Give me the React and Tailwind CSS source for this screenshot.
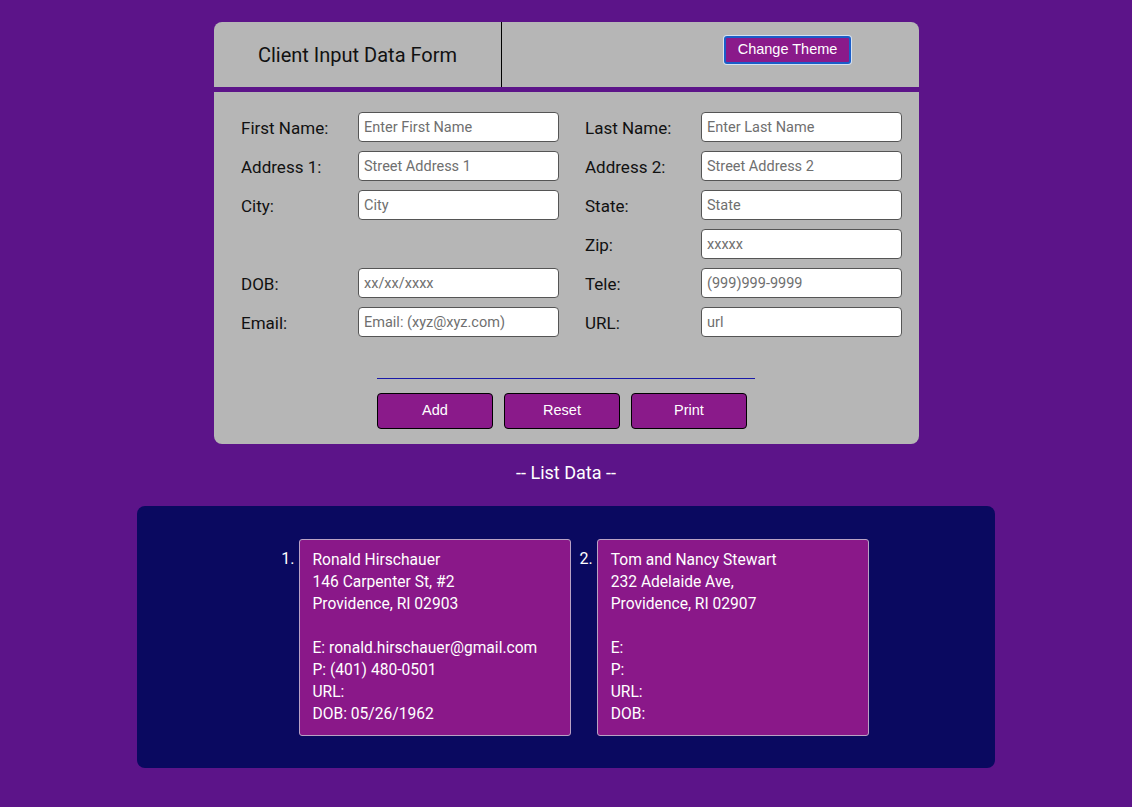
import React from "react";

const fields = [
  [
    { label: "First Name:", ph: "Enter First Name" },
    { label: "Last Name:", ph: "Enter Last Name" },
  ],
  [
    { label: "Address 1:", ph: "Street Address 1" },
    { label: "Address 2:", ph: "Street Address 2" },
  ],
  [
    { label: "City:", ph: "City" },
    { label: "State:", ph: "State" },
  ],
  [null, { label: "Zip:", ph: "xxxxx" }],
  [
    { label: "DOB:", ph: "xx/xx/xxxx" },
    { label: "Tele:", ph: "(999)999-9999" },
  ],
  [
    { label: "Email:", ph: "Email: (xyz@xyz.com)" },
    { label: "URL:", ph: "url" },
  ],
];

const clients = [
  {
    name: "Ronald Hirschauer",
    addr1: "146 Carpenter St, #2",
    addr2: "Providence, RI 02903",
    email: "ronald.hirschauer@gmail.com",
    phone: "(401) 480-0501",
    url: "",
    dob: "05/26/1962",
  },
  {
    name: "Tom and Nancy Stewart",
    addr1: "232 Adelaide Ave,",
    addr2: "Providence, RI 02907",
    email: "",
    phone: "",
    url: "",
    dob: "",
  },
];

function Field({ field, labelWidth }) {
  if (!field) return <div className="w-[318px]" />;
  return (
    <div className="flex items-center">
      <label className={`${labelWidth} pt-[3px] text-[17px] text-[#111]`}>{field.label}</label>
      <input
        placeholder={field.ph}
        className="h-[30px] w-[201px] rounded-[4px] border border-[#555] bg-white px-[5px] text-[14.5px] text-black placeholder:text-[#6f6f6f] outline-none"
      />
    </div>
  );
}

export default function App() {
  return (
    <div
      className="min-h-[807px] w-full bg-[#5c1489] pt-[22px]"
      style={{ fontFamily: "Roboto, 'Liberation Sans', sans-serif" }}
    >
      {/* form card */}
      <div className="ml-[214px] w-[705px] overflow-hidden rounded-[8px] bg-[#b6b6b6]">
        <div className="box-content flex h-[65px] border-b-[5px] border-[#5c1489]">
          <div className="flex w-[288px] items-center justify-center border-r border-black">
            <h1 className="text-[20px] text-[#111]">Client Input Data Form</h1>
          </div>
          <div className="flex-1 pl-[222px] pt-[14px]">
            <button
              className="h-[28px] w-[127px] rounded-[3px] border-2 border-[#1a5dc8] bg-[#8a1a8a] text-[14.5px] text-white shadow-[0_0_0_1px_#d6e2f2]"
              style={{ fontFamily: "'Liberation Sans', Arial, sans-serif" }}
            >
              Change Theme
            </button>
          </div>
        </div>

        <div className="pl-[27px] pr-[16px] pt-[20px] pb-[15px]">
          <div className="flex flex-col gap-[9px]">
            {fields.map((row, i) => (
              <div key={i} className="flex gap-[26px]">
                <Field field={row[0]} labelWidth="w-[117px]" />
                <Field field={row[1]} labelWidth="w-[116px]" />
              </div>
            ))}
          </div>
          <div className="ml-[136px] mt-[41px] h-px w-[378px] bg-[#1a1aa8]" />
          <div className="ml-[136px] mt-[14px] flex gap-[11px]">
            {["Add", "Reset", "Print"].map((b) => (
              <button
                key={b}
                className="h-[36px] w-[116px] rounded-[4px] border border-black bg-[#8a1a8a] text-[14.5px] text-white"
                style={{ fontFamily: "'Liberation Sans', Arial, sans-serif" }}
              >
                {b}
              </button>
            ))}
          </div>
        </div>
      </div>

      <div className="mt-[17px] text-center text-[18px] leading-[24px] text-white">
        -- List Data --
      </div>

      {/* list panel */}
      <div className="ml-[137px] mt-[21px] w-[858px] rounded-[8px] bg-[#0a0960] pt-[33px] pb-[32px]">
        <div className="flex justify-center gap-[9px] pl-[18px]">
          {clients.map((c, i) => (
            <div key={i} className="flex items-start gap-[4px]">
              <span className="pt-[9px] text-[16px] leading-[22px] text-white">{i + 1}.</span>
              <div className="w-[272px] rounded-[3px] border border-[#b9a2c4] bg-[#8a1889] px-[13px] pt-[9px] pb-[10px] text-[15.6px] leading-[22px] text-white">
                <div>{c.name}</div>
                <div>{c.addr1}</div>
                <div>{c.addr2}</div>
                <div className="h-[22px]" />
                <div>E: {c.email}</div>
                <div>P: {c.phone}</div>
                <div>URL: {c.url}</div>
                <div>DOB: {c.dob}</div>
              </div>
            </div>
          ))}
        </div>
      </div>
    </div>
  );
}
